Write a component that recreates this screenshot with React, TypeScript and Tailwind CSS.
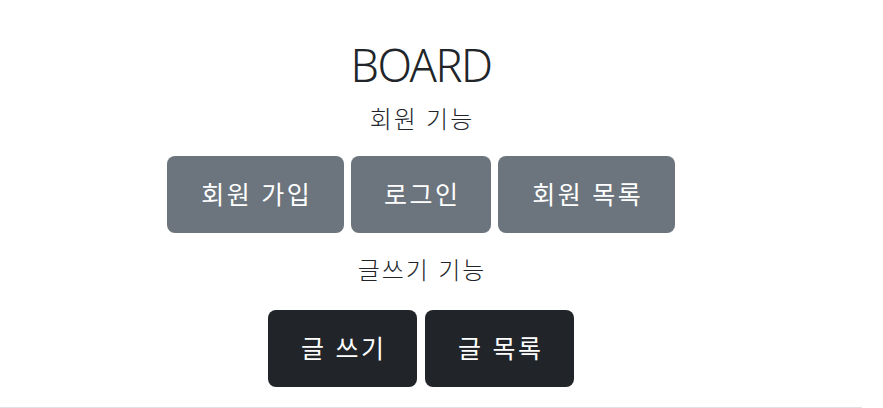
import React from "react";

const memberMenu = ["회원 가입", "로그인", "회원 목록"];
const boardMenu = ["글 쓰기", "글 목록"];

// widths taken from the screenshot
const memberWidths = ["w-[177px]", "w-[140px]", "w-[177px]"];

function App() {
  return (
    <div
      className="w-[883px] h-[408px] bg-white text-[#212529] overflow-hidden"
      style={{ fontFamily: '"Noto Sans", "Noto Sans CJK KR", sans-serif' }}
    >
      <div className="w-[842px] flex flex-col items-center">
        <h1 className="mt-[38px] text-[45px] leading-[54px] font-light tracking-[-1.5px]">
          BOARD
        </h1>

        {/* 회원 기능 */}
        <div className="mt-[10px] text-[24px] leading-[34px] font-light tracking-[2px] pl-[2px]">
          회원 기능
        </div>
        <div className="mt-[20px] flex gap-[7px]">
          {memberMenu.map((label, i) => (
            <button
              key={label}
              className={`${memberWidths[i]} h-[77px] rounded-lg bg-[#6c757d] text-white text-[25px] tracking-[2.5px] pl-[2.5px]`}
            >
              {label}
            </button>
          ))}
        </div>

        {/* 글쓰기 기능 */}
        <div className="mt-[20px] text-[24px] leading-[34px] font-light tracking-[2px] pl-[2px]">
          글쓰기 기능
        </div>
        <div className="mt-[23px] flex gap-2">
          {boardMenu.map((label) => (
            <button
              key={label}
              className="w-[149px] h-[77px] rounded-lg bg-[#212529] text-white text-[25px] tracking-[2.5px] pl-[2.5px]"
            >
              {label}
            </button>
          ))}
        </div>
      </div>
      <div className="mt-[20px] w-[862px] border-t border-[#dee2e6]" />
    </div>
  );
}

export default App;
